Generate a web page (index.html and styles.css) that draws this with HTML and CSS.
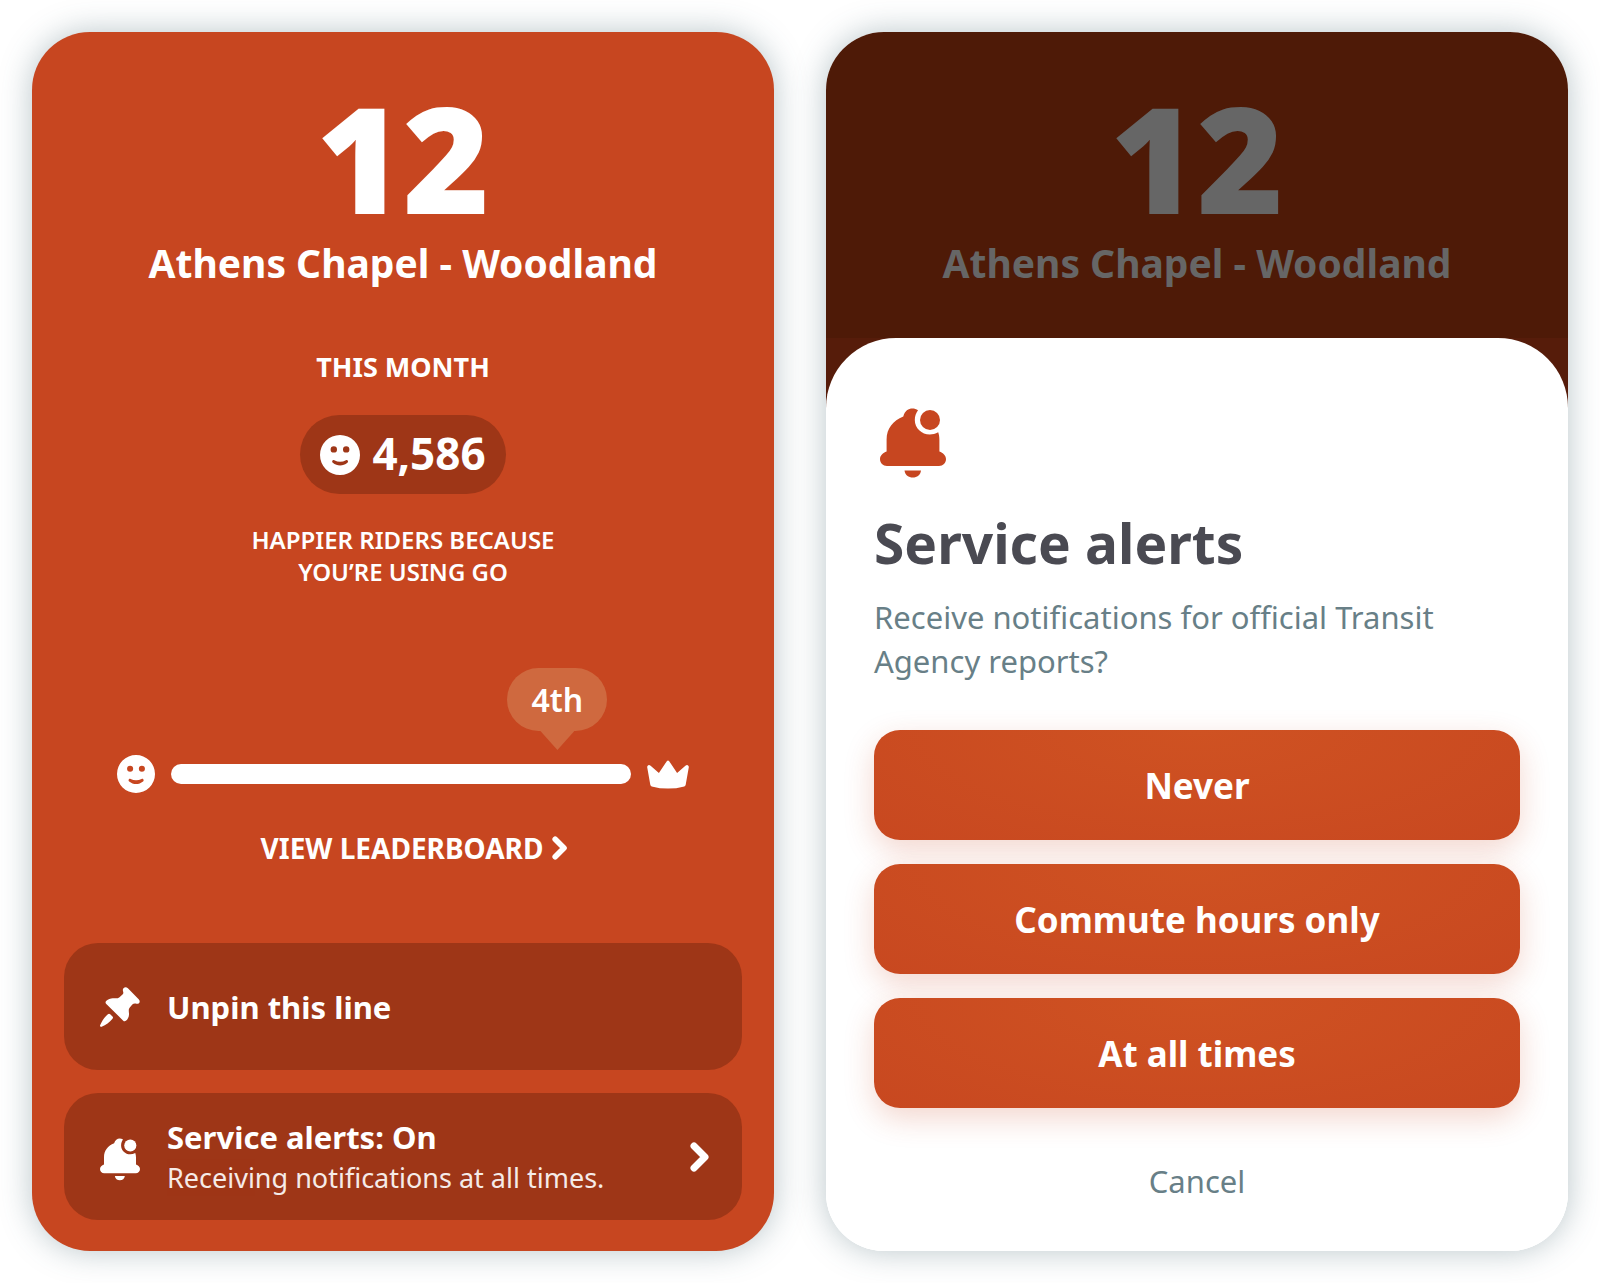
FILE: index.html
```html
<!DOCTYPE html>
<html lang="en">
<head>
<meta charset="utf-8">
<meta name="viewport" content="width=device-width, initial-scale=1">
<title>Line 12 – Athens Chapel - Woodland</title>
<link rel="stylesheet" href="styles.css">
</head>
<body>
<svg class="sprite" aria-hidden="true">
  <symbol id="smiley" viewBox="0 0 40 40">
    <path fill-rule="evenodd" d="M20 0a20 20 0 1 1 0 40a20 20 0 1 1 0-40zM13.800 11.200a3.200 3.200 0 1 0 0 6.400a3.200 3.200 0 1 0 0-6.400zM26.200 11.200a3.200 3.200 0 1 0 0 6.400a3.200 3.200 0 1 0 0-6.400zM14.300 25.200c-1.600-.8-3 1.300-1.500 2.600c4.300 3.600 10.300 3.600 14.600 0c1.500-1.300.1-3.400-1.500-2.600c-3.800 2-7.800 2-11.600 0z"/>
  </symbol>
  <symbol id="bell" viewBox="0 -8 66 78">
    <path d="M38 2.200C33.500-1 25.500-.5 23.300 8.500C13 12.500 6.600 20.500 6.600 31.500V43.500C3 45 0 47.500 0 51C0 55 3 58 7 58H59C63 58 66 55 66 51C66 47.500 63 45 59.400 43.500V32C59.400 29 59 26.500 58.200 24.300C47 30.500 34.800 23 34.800 12C34.800 8 36 5 38 2.200z"/>
    <circle cx="50" cy="12" r="10"/>
    <path d="M24.500 62.500H41C40.500 67 37 69.500 32.800 69.500C28.500 69.500 25 67 24.500 62.500z"/>
  </symbol>
  <symbol id="chevron" viewBox="0 0 20 30">
    <path d="M4 4L15 15L4 26" fill="none" stroke="currentColor" stroke-width="7" stroke-linecap="round" stroke-linejoin="round"/>
  </symbol>
</svg>
<main class="screens">
  <section class="card line">
    <header class="line-head">
      <p class="line-number">12</p>
      <h1 class="line-name">Athens Chapel - Woodland</h1>
    </header>
    <h2 class="period">THIS MONTH</h2>
    <p class="score"><svg class="score-icon"><use href="#smiley"/></svg><span>4,586</span></p>
    <p class="caption">HAPPIER RIDERS BECAUSE<br>YOU’RE USING GO</p>
    <div class="rank">
      <svg class="rank-smiley"><use href="#smiley"/></svg>
      <div class="track"><span class="bubble" style="left: 84%">4th</span></div>
      <svg class="rank-crown" viewBox="0 0 42 29"><path d="M1.300 5.200Q2.500 4.800 3.600 5.800L11.900 13L19.800 1.200Q21 -.4 22.200 1.200L30.100 13L38.400 5.800Q39.500 4.800 40.700 5.200Q42 5.800 41.800 7.300L38.700 24.800Q38.500 26 37.300 26.400Q21 30.800 4.700 26.400Q3.500 26 3.300 24.800L.2 7.300Q0 5.800 1.300 5.200z"/></svg>
    </div>
    <a class="leaderboard" href="#leaderboard">VIEW LEADERBOARD<svg class="chevron-small"><use href="#chevron"/></svg></a>
    <div class="actions">
      <button class="action" type="button">
        <svg class="action-icon" viewBox="0 0 40 40"><path d="M23.500 1.300C24.800-.4 26.600 0 27.900 1.300L38.900 12.500C40.800 14.700 39 17.200 36.400 16.700C34.500 16.400 33.300 16.600 32.300 17.600L29.800 20.500C28.500 22 28.700 24 29 26.500C29.200 29.500 28 32 26.200 33.600C25 34.600 24 34.400 23 33.400L6.300 17.100C5.200 16 5.300 14.800 6.400 13.800C8.300 11.900 11 11 13.500 11.200C16 11.400 18 11.500 19.500 10.200L22.500 7.600C23.500 6.700 23.500 5.500 23 4.200C22.700 3 22.800 2.200 23.500 1.300z"/><path d="M7.900 27.200Q9 26.200 10.200 27.200L12.500 29.400Q13.500 30.500 12.500 31.700C9.500 35.500 6 38 1.600 39.800C.5 40.200-.4 39.300.1 38.200C2 34 4.300 30.500 7.900 27.200z"/></svg>
        <span class="action-title">Unpin this line</span>
      </button>
      <button class="action" type="button">
        <svg class="action-icon"><use href="#bell"/></svg>
        <span class="action-text">
          <span class="action-title">Service alerts: On</span>
          <span class="action-note">Receiving notifications at all times.</span>
        </span>
        <svg class="chevron"><use href="#chevron"/></svg>
      </button>
    </div>
  </section>

  <section class="card dimmed">
    <header class="line-head">
      <p class="line-number">12</p>
      <p class="line-name">Athens Chapel - Woodland</p>
    </header>
    <div class="sheet" role="dialog" aria-labelledby="sheet-title">
      <svg class="sheet-icon"><use href="#bell"/></svg>
      <h2 class="sheet-title" id="sheet-title">Service alerts</h2>
      <p class="sheet-text">Receive notifications for official Transit Agency reports?</p>
      <div class="options">
        <button class="option" type="button">Never</button>
        <button class="option" type="button">Commute hours only</button>
        <button class="option" type="button">At all times</button>
      </div>
      <button class="cancel" type="button">Cancel</button>
    </div>
  </section>
</main>
</body>
</html>
```
FILE: styles.css
```css
* {
  box-sizing: border-box;
  margin: 0;
}

body {
  background: #fff;
  font-family: "Noto Sans", "Open Sans", sans-serif;
}

svg {
  display: block;
  flex: none;
  fill: currentColor;
}

button {
  border: 0;
  font-family: inherit;
  color: inherit;
}

.sprite {
  position: absolute;
  width: 0;
  height: 0;
}

.screens {
  display: grid;
  grid-template-columns: 1fr 1fr;
  gap: 52px;
  padding: 32px;
}

.card {
  display: flex;
  flex-direction: column;
  align-items: center;
  padding-top: 48px;
  border-radius: 58px;
  overflow: hidden;
  color: #fff;
  background: #c74620;
  box-shadow: 0 0 32px rgba(60, 95, 105, 0.36);
}

.line {
  padding: 48px 32px 31px;
}

.line-head {
  text-align: center;
}

.line-number {
  font-size: 148px;
  line-height: 154px;
  font-weight: 900;
}

.line-name {
  margin-top: 1px;
  font-size: 39px;
  line-height: 56px;
  font-weight: 700;
}

.period {
  margin-top: 58px;
  font-size: 27px;
  line-height: 36px;
  font-weight: 700;
}

.score {
  display: flex;
  align-items: center;
  gap: 12px;
  height: 79px;
  margin-top: 30px;
  padding: 0 20px;
  border-radius: 40px;
  background: #9e3617;
  font-size: 44px;
  line-height: 54px;
  font-weight: 700;
}

.score span {
  padding-bottom: 4px;
}

.score-icon {
  width: 40px;
  height: 40px;
}

.caption {
  margin-top: 30px;
  font-size: 24px;
  line-height: 32px;
  font-weight: 600;
  text-align: center;
}

.rank {
  display: flex;
  align-items: center;
  gap: 16px;
  width: 100%;
  margin-top: 167px;
  padding: 0 53px;
}

.rank-smiley {
  width: 38px;
  height: 38px;
}

.rank-crown {
  width: 42px;
  height: 29px;
}

.track {
  position: relative;
  flex: 1;
  height: 20px;
  border-radius: 10px;
  background: #fff;
}

.bubble {
  position: absolute;
  bottom: 53px;
  width: 100px;
  height: 63px;
  border-radius: 32px;
  background: #cf693f;
  font-size: 32px;
  line-height: 64px;
  font-weight: 600;
  text-align: center;
  transform: translateX(-50%);
}

.bubble::after {
  content: "";
  position: absolute;
  top: 100%;
  left: 50%;
  width: 34px;
  height: 19px;
  background: inherit;
  clip-path: polygon(0 0, 100% 0, 50% 100%);
  transform: translateX(-50%);
}

.leaderboard {
  display: flex;
  align-items: center;
  gap: 8px;
  margin-top: 37px;
  padding-left: 24px;
  color: inherit;
  font-size: 28px;
  line-height: 36px;
  font-weight: 700;
  text-decoration: none;
}

.chevron-small {
  width: 18px;
  height: 24px;
}

.actions {
  display: grid;
  gap: 23px;
  width: 100%;
  margin-top: 77px;
}

.action {
  display: flex;
  align-items: center;
  gap: 27px;
  height: 127px;
  padding: 0 32px 0 36px;
  border-radius: 34px;
  background: #9e3617;
  text-align: left;
}

.action-icon {
  width: 40px;
  height: 48px;
}

.action-text {
  flex: 1;
}

.action-title {
  display: block;
  font-size: 31px;
  line-height: 42px;
  font-weight: 700;
}

.action-note {
  display: block;
  font-size: 27px;
  line-height: 40px;
  font-weight: 400;
  opacity: 0.9;
}

.chevron {
  width: 20px;
  height: 30px;
}

.dimmed {
  color: #666;
  background: linear-gradient(#4e1a07 306px, #561c0a 306px 480px, #fff 480px);
}

.sheet {
  display: flex;
  flex: 1;
  flex-direction: column;
  width: 100%;
  margin-top: 47px;
  padding: 62px 48px 48px;
  border-radius: 70px 70px 0 0;
  background: #fff;
}

.sheet-icon {
  width: 66px;
  height: 78px;
  margin-left: 6px;
  color: #c74620;
}

.sheet-title {
  margin-top: 33px;
  color: #4a4a52;
  font-size: 55px;
  line-height: 64px;
  font-weight: 700;
}

.sheet-text {
  margin-top: 20px;
  color: #687f87;
  font-size: 31px;
  line-height: 44px;
}

.options {
  display: grid;
  gap: 24px;
  margin-top: 47px;
}

.option {
  height: 110px;
  border-radius: 26px;
  color: #fff;
  background: radial-gradient(ellipse at 50% 0, #cf5222, #c84820);
  box-shadow: 0 10px 30px rgba(199, 70, 32, 0.22);
  font-size: 35px;
  font-weight: 700;
}

.cancel {
  align-self: center;
  margin-top: 51px;
  padding: 0 16px;
  background: none;
  color: #687f87;
  font-size: 31px;
  line-height: 44px;
}
```
